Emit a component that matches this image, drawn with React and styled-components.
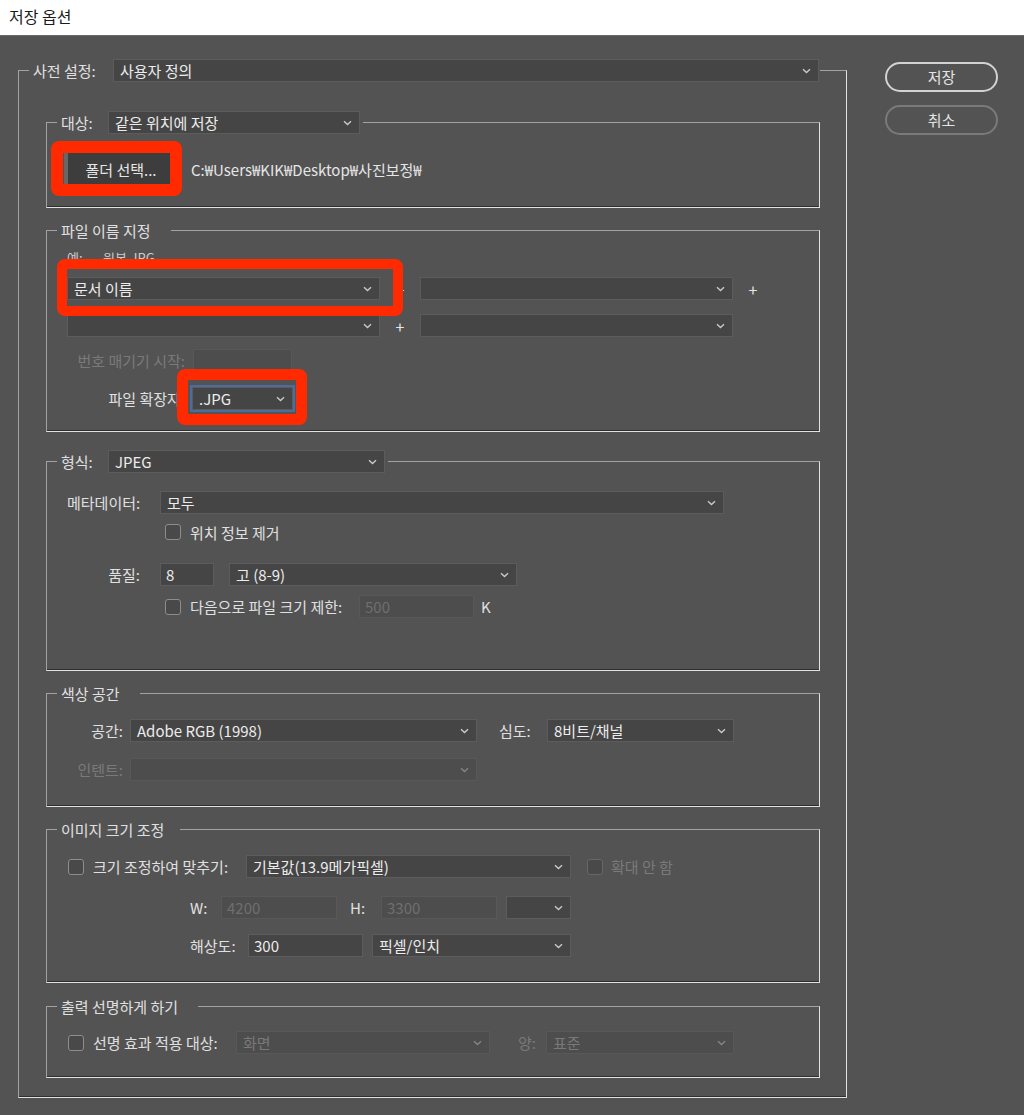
import React from "react";
import styled, { createGlobalStyle } from "styled-components";

const GlobalStyle = createGlobalStyle`
  html, body {
    margin: 0;
    padding: 0;
  }
  body {
    background: #535353;
    font-family: "Noto Sans CJK KR", "Noto Sans", sans-serif;
    font-size: 15px;
    color: #e0e0e0;
  }
`;

const Window = styled.div`
  width: 1024px;
  height: 1115px;
  background: #535353;
  overflow: hidden;
`;

const TitleBar = styled.div`
  height: 36px;
  box-sizing: border-box;
  padding: 0 0 4px 9px;
  display: flex;
  align-items: center;
  background: #fff;
  border-bottom: 1px solid #6a6a6a;
  font-size: 16px;
  color: #1b1b1b;
`;

const Body = styled.div`
  display: flex;
  align-items: flex-start;
  gap: 38px;
  padding-left: 18px;
`;

const Group = styled.fieldset`
  margin: ${(p) => p.$mt || 0}px 0 0;
  padding: 0;
  min-width: 0;
  width: ${(p) => p.$w || 774}px;
  box-sizing: border-box;
  border: 1px solid #a2a2a2;
  border-right-color: #e2e2e2;
  border-bottom-color: #e2e2e2;
  box-shadow: inset 0 -1px 0 #2f2f2f;
`;

const Legend = styled.legend`
  display: flex;
  align-items: center;
  height: 23px;
  margin-left: 10px;
  padding: 0 ${(p) => p.$pr ?? 3}px 0 4px;
  white-space: nowrap;
  color: #e2e2e2;
`;

const GroupBody = styled.div`
  display: flex;
  flex-direction: column;
  padding: ${(p) => p.$pt}px ${(p) => p.$pr ?? 0}px ${(p) => p.$pb}px
    ${(p) => p.$pl ?? 20}px;
`;

const Row = styled.div`
  display: flex;
  align-items: center;
  height: ${(p) => p.$h ?? 23}px;
  margin-top: ${(p) => p.$mt ?? 0}px;
  margin-left: ${(p) => p.$ml ?? 0}px;
`;

// fixed-width slot so the field after it lands where it does in the dialog
const Label = styled.span`
  flex-shrink: 0;
  width: ${(p) => (p.$w ? `${p.$w}px` : "auto")};
  text-align: ${(p) => (p.$right ? "right" : "left")};
  margin-left: ${(p) => p.$ml ?? 0}px;
  margin-right: ${(p) => p.$gap ?? 0}px;
  white-space: nowrap;
  font-size: ${(p) => p.$size ?? 15}px;
  color: ${(p) => (p.$disabled ? "#7a7a7a" : p.$dim ? "#cdcdcd" : "#e0e0e0")};
`;

const SelectBox = styled.div`
  flex-shrink: 0;
  display: flex;
  align-items: center;
  justify-content: space-between;
  width: ${(p) => p.$w}px;
  height: 23px;
  box-sizing: border-box;
  margin-left: ${(p) => p.$ml ?? 0}px;
  padding: 0 7px 0 6px;
  background: ${(p) => (p.$disabled ? "#4d4d4d" : "#454545")};
  border: 1px solid ${(p) => (p.$disabled ? "#585858" : "#5c5c5c")};
  outline: ${(p) => (p.$focus ? "2px solid #4b6c9e" : "none")};
  color: ${(p) => (p.$disabled ? "#797979" : "#ececec")};
  white-space: nowrap;
`;

const TextBox = styled.div`
  flex-shrink: 0;
  display: flex;
  align-items: center;
  width: ${(p) => p.$w}px;
  height: 23px;
  box-sizing: border-box;
  margin-left: ${(p) => p.$ml ?? 0}px;
  padding-left: 5px;
  background: ${(p) => (p.$disabled ? "#4d4d4d" : "#454545")};
  border: 1px solid ${(p) => (p.$disabled ? "#585858" : "#5c5c5c")};
  color: ${(p) => (p.$disabled ? "#6f6f6f" : "#ececec")};
`;

const Check = styled.span`
  flex-shrink: 0;
  width: 16px;
  height: 16px;
  box-sizing: border-box;
  margin-left: ${(p) => p.$ml ?? 0}px;
  margin-right: ${(p) => p.$gap ?? 9}px;
  border: 1px solid ${(p) => (p.$disabled ? "#676767" : "#8d8d8d")};
  border-radius: 3px;
  background: #494949;
`;

const Plus = styled.span`
  flex-shrink: 0;
  width: 40px;
  text-align: center;
  font-size: 16px;
  color: #e6e6e6;
`;

const Marked = styled.div`
  position: relative;
  display: flex;
  flex-shrink: 0;
`;

const RedFrame = styled.span`
  position: absolute;
  top: ${(p) => -p.$t}px;
  right: ${(p) => -p.$r}px;
  bottom: ${(p) => -p.$b}px;
  left: ${(p) => -p.$l}px;
  border: ${(p) => p.$w}px solid #ff2a00;
  border-radius: 8px;
  z-index: 2;
  pointer-events: none;
`;

const PushButton = styled.div`
  display: flex;
  align-items: center;
  justify-content: center;
  width: 108px;
  height: 32px;
  box-sizing: border-box;
  padding-left: 2px;
  background: #3d3d3d;
  border-left: 4px solid #676767;
  color: #e6e6e6;
`;

const PathText = styled.span`
  margin-left: 19px;
  color: #e6e6e6;
  white-space: nowrap;
`;

const ButtonColumn = styled.div`
  display: flex;
  flex-direction: column;
  gap: 13px;
  margin-top: 26px;
`;

const PillButton = styled.div`
  display: flex;
  align-items: center;
  justify-content: center;
  width: 113px;
  height: 30px;
  box-sizing: border-box;
  padding-bottom: 2px;
  border: 2px solid ${(p) => (p.$primary ? "#d2d2d2" : "#7a7a7a")};
  border-radius: 15px;
  color: #e4e4e4;
`;

const Chevron = ({ disabled }) => (
  <svg width="9" height="6" viewBox="0 0 9 6">
    <path
      d="M1 1.2 4.5 4.6 8 1.2"
      fill="none"
      stroke={disabled ? "#858585" : "#c9c9c9"}
      strokeWidth="1.4"
    />
  </svg>
);

const Select = ({ w, ml, disabled, focus, children }) => (
  <SelectBox $w={w} $ml={ml} $disabled={disabled} $focus={focus}>
    <span>{children}</span>
    <Chevron disabled={disabled} />
  </SelectBox>
);

export default function App() {
  return (
    <Window>
      <GlobalStyle />
      <TitleBar>저장 옵션</TitleBar>
      <Body>
        <Group $mt={23} $w={829}>
          <Legend $pr={1}>
            <Label $w={80}>사전 설정:</Label>
            <Select w={706}>사용자 정의</Select>
          </Legend>
          <GroupBody $pt={29} $pr={26} $pb={19} $pl={27}>
            {/* 대상 */}
            <Group>
              <Legend>
                <Label $w={47}>대상:</Label>
                <Select w={252}>같은 위치에 저장</Select>
              </Legend>
              <GroupBody $pt={19} $pb={22} $pl={17}>
                <Row $h={32}>
                  <Marked>
                    <PushButton>폴더 선택...</PushButton>
                    <RedFrame $t={12} $b={11} $l={13} $r={10} $w={12} />
                  </Marked>
                  <PathText>C:₩Users₩KIK₩Desktop₩사진보정₩</PathText>
                </Row>
              </GroupBody>
            </Group>

            {/* 파일 이름 지정 */}
            <Group $mt={11}>
              <Legend $pr={20}>
                <Label>파일 이름 지정</Label>
              </Legend>
              <GroupBody $pt={7} $pb={21}>
                <Row $h={16}>
                  <Label $w={36} $size={13} $dim>
                    예:
                  </Label>
                  <Label $size={13} $dim>
                    원본.JPG
                  </Label>
                </Row>
                <Row $mt={12}>
                  <Marked>
                    <Select w={313}>문서 이름</Select>
                    <RedFrame $t={18} $b={16} $l={10} $r={23} $w={10} />
                  </Marked>
                  <Plus>+</Plus>
                  <Select w={313} />
                  <Plus>+</Plus>
                </Row>
                <Row $mt={14}>
                  <Select w={313} />
                  <Plus>+</Plus>
                  <Select w={313} />
                </Row>
                <Row $mt={12}>
                  <Label $w={118} $right $gap={8} $disabled>
                    번호 매기기 시작:
                  </Label>
                  <TextBox $w={99} $disabled />
                </Row>
                <Row $mt={15}>
                  <Label $w={118} $right $gap={7}>
                    파일 확장자:
                  </Label>
                  <Marked>
                    <Select w={101} focus>
                      .JPG
                    </Select>
                    <RedFrame $t={18} $b={15} $l={15} $r={14} $w={11} />
                  </Marked>
                </Row>
              </GroupBody>
            </Group>

            {/* 형식 */}
            <Group $mt={18}>
              <Legend>
                <Label $w={47}>형식:</Label>
                <Select w={277}>JPEG</Select>
              </Legend>
              <GroupBody $pt={18} $pb={52}>
                <Row>
                  <Label $w={73} $right $gap={20}>
                    메타데이터:
                  </Label>
                  <Select w={564}>모두</Select>
                </Row>
                <Row $h={16} $mt={10} $ml={98}>
                  <Check />
                  <Label>위치 정보 제거</Label>
                </Row>
                <Row $mt={23}>
                  <Label $w={73} $right $gap={20}>
                    품질:
                  </Label>
                  <TextBox $w={54}>8</TextBox>
                  <Select w={288} ml={15}>
                    고 (8-9)
                  </Select>
                </Row>
                <Row $mt={9} $ml={98}>
                  <Check />
                  <Label $w={169}>다음으로 파일 크기 제한:</Label>
                  <TextBox $w={115} $disabled>
                    500
                  </TextBox>
                  <Label $ml={7}>K</Label>
                </Row>
              </GroupBody>
            </Group>

            {/* 색상 공간 */}
            <Group $mt={11}>
              <Legend $pr={20}>
                <Label>색상 공간</Label>
              </Legend>
              <GroupBody $pt={14} $pb={25}>
                <Row>
                  <Label $w={56} $right $gap={7}>
                    공간:
                  </Label>
                  <Select w={347}>Adobe RGB (1998)</Select>
                  <Label $w={48} $ml={22}>
                    심도:
                  </Label>
                  <Select w={187}>8비트/채널</Select>
                </Row>
                <Row $mt={16}>
                  <Label $w={56} $right $gap={7} $disabled>
                    인텐트:
                  </Label>
                  <Select w={347} disabled />
                </Row>
              </GroupBody>
            </Group>

            {/* 이미지 크기 조정 */}
            <Group $mt={11}>
              <Legend $pr={16}>
                <Label>이미지 크기 조정</Label>
              </Legend>
              <GroupBody $pt={14} $pb={25} $pl={21}>
                <Row>
                  <Check />
                  <Label $w={153}>크기 조정하여 맞추기:</Label>
                  <Select w={325}>기본값(13.9메가픽셀)</Select>
                  <Check $ml={16} $gap={8} $disabled />
                  <Label $disabled>확대 안 함</Label>
                </Row>
                <Row $mt={18} $ml={122}>
                  <Label $w={31}>W:</Label>
                  <TextBox $w={116} $disabled>
                    4200
                  </TextBox>
                  <Label $w={31} $ml={13}>
                    H:
                  </Label>
                  <TextBox $w={116} $disabled>
                    3300
                  </TextBox>
                  <Select w={65} ml={9} />
                </Row>
                <Row $mt={15} $ml={122}>
                  <Label $w={58}>해상도:</Label>
                  <TextBox $w={115}>300</TextBox>
                  <Select w={199} ml={9}>
                    픽셀/인치
                  </Select>
                </Row>
              </GroupBody>
            </Group>

            {/* 출력 선명하게 하기 */}
            <Group $mt={12}>
              <Legend $pr={20}>
                <Label>출력 선명하게 하기</Label>
              </Legend>
              <GroupBody $pt={13} $pb={23} $pl={21}>
                <Row>
                  <Check />
                  <Label $w={143}>선명 효과 적용 대상:</Label>
                  <Select w={254} disabled>
                    화면
                  </Select>
                  <Label $w={28} $ml={28} $disabled>
                    양:
                  </Label>
                  <Select w={188} disabled>
                    표준
                  </Select>
                </Row>
              </GroupBody>
            </Group>
          </GroupBody>
        </Group>

        <ButtonColumn>
          <PillButton $primary>저장</PillButton>
          <PillButton>취소</PillButton>
        </ButtonColumn>
      </Body>
    </Window>
  );
}
